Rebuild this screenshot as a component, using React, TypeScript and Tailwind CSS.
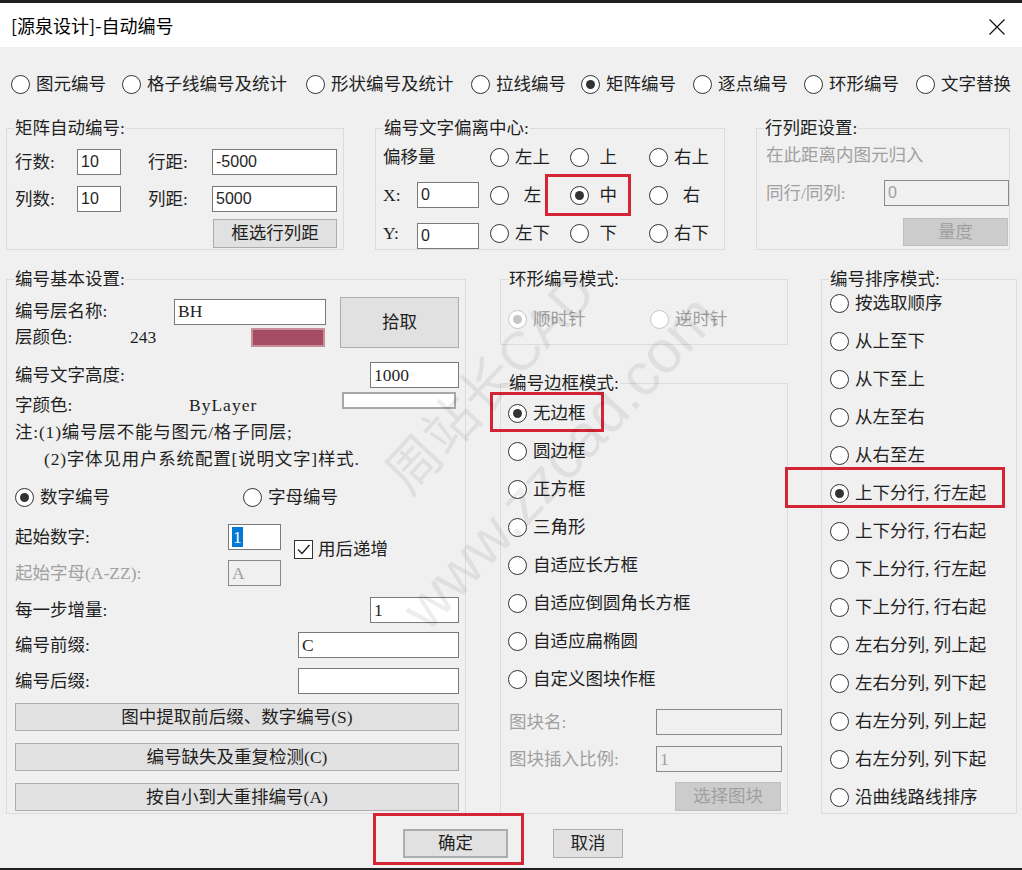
import React from "react";

const BODY_FONT = "font-['Liberation_Serif','Noto_Sans_CJK_SC',serif]";

function Radio({
  label,
  checked = false,
  disabled = false,
  className = "",
}: {
  label: string;
  checked?: boolean;
  disabled?: boolean;
  className?: string;
}) {
  return (
    <div className={`flex h-[24px] items-center ${className}`}>
      <span
        className={`flex h-[19px] w-[19px] shrink-0 items-center justify-center rounded-full border bg-white ${
          disabled ? "border-[#c6c6c6]" : "border-[#333333]"
        }`}
      >
        {checked ? (
          <span className={`h-[9px] w-[9px] rounded-full ${disabled ? "bg-[#c6c6c6]" : "bg-[#333333]"}`} />
        ) : null}
      </span>
      <span className={`ml-[6px] whitespace-pre ${disabled ? "text-[#a0a0a0]" : ""}`}>{label}</span>
    </div>
  );
}

function TextBox({
  value = "",
  className = "",
  disabled = false,
  sans = false,
  selected = false,
}: {
  value?: string;
  className?: string;
  disabled?: boolean;
  sans?: boolean;
  selected?: boolean;
}) {
  return (
    <div
      className={`flex h-[26px] shrink-0 items-center border pl-[3px] ${
        disabled ? "border-[#8a8a8a] bg-[#f0f0f0] text-[#a0a0a0]" : "border-[#7a7a7a] bg-white text-[#1f1f1f]"
      } ${sans ? "font-['Liberation_Sans',sans-serif] text-[16px]" : ""} ${className}`}
    >
      {selected ? <span className="bg-[#0078d7] px-[1px] leading-[20px] text-white">{value}</span> : value}
    </div>
  );
}

function Button({
  label,
  className = "",
  disabled = false,
}: {
  label: string;
  className?: string;
  disabled?: boolean;
}) {
  return (
    <div
      className={`flex shrink-0 items-center justify-center border ${
        disabled ? "border-[#bfbfbf] bg-[#cccccc] text-[#a0a0a0]" : "border-[#adadad] bg-[#e1e1e1] text-[#1f1f1f]"
      } ${className}`}
    >
      {label}
    </div>
  );
}

function GroupBox({
  title,
  className = "",
  children,
}: {
  title: string;
  className?: string;
  children?: React.ReactNode;
}) {
  return (
    <fieldset className={`shrink-0 border border-[#dcdcdc] ${className}`}>
      <legend className="ml-[7px] px-[1px] leading-[20px]">{title}</legend>
      {children}
    </fieldset>
  );
}

/** Red annotation frame drawn over the screenshot. */
function Mark({ className }: { className: string }) {
  return <div className={`pointer-events-none absolute border-[3px] border-[#d42535] ${className}`} />;
}

const topModes = [
  { label: "图元编号", w: "w-[111px]" },
  { label: "格子线编号及统计", w: "w-[184px]" },
  { label: "形状编号及统计", w: "w-[165px]" },
  { label: "拉线编号", w: "w-[110px]" },
  { label: "矩阵编号", w: "w-[112px]", checked: true },
  { label: "逐点编号", w: "w-[111px]" },
  { label: "环形编号", w: "w-[112px]" },
  { label: "文字替换", w: "" },
];

const frameModes = [
  "无边框",
  "圆边框",
  "正方框",
  "三角形",
  "自适应长方框",
  "自适应倒圆角长方框",
  "自适应扁椭圆",
  "自定义图块作框",
];

const sortModes = [
  "按选取顺序",
  "从上至下",
  "从下至上",
  "从左至右",
  "从右至左",
  "上下分行, 行左起",
  "上下分行, 行右起",
  "下上分行, 行左起",
  "下上分行, 行右起",
  "左右分列, 列上起",
  "左右分列, 列下起",
  "右左分列, 列上起",
  "右左分列, 列下起",
  "沿曲线路线排序",
];

export default function App() {
  return (
    <div className={`relative flex h-[870px] w-[1022px] flex-col overflow-hidden bg-[#f0f0f0] text-[17.5px] text-[#1f1f1f] ${BODY_FONT}`}>
      <div className="h-[3px] shrink-0 bg-[#1f1f1f]" />

      {/* title bar */}
      <div className="flex h-[44px] shrink-0 items-center justify-between bg-white pl-[11px] pr-[17px] font-['Noto_Sans_CJK_SC',sans-serif] text-[18px] text-black">
        <span>[源泉设计]-自动编号</span>
        <svg width="16" height="16" viewBox="0 0 16 16" className="mt-[3px]">
          <path d="M0.5 0.5 L15.5 15.5 M15.5 0.5 L0.5 15.5" stroke="#111" strokeWidth="1.2" fill="none" />
        </svg>
      </div>

      <div className="flex flex-1 flex-col">
        {/* numbering type */}
        <div className="mt-[25px] flex pl-[11px]">
          {topModes.map((m) => (
            <Radio key={m.label} label={m.label} checked={m.checked} className={m.w} />
          ))}
        </div>

        {/* matrix settings */}
        <div className="mt-[22px] flex">
          <GroupBox title="矩阵自动编号:" className="ml-[6px] h-[132px] w-[338px]">
            <div className="pl-[8px]">
              <div className="mt-[11px] flex h-[26px] items-center">
                <span className="w-[62px]">行数:</span>
                <TextBox value="10" sans className="w-[44px]" />
                <span className="ml-[27px] w-[64px]">行距:</span>
                <TextBox value="-5000" sans className="w-[125px]" />
              </div>
              <div className="mt-[11px] flex h-[26px] items-center">
                <span className="w-[62px]">列数:</span>
                <TextBox value="10" sans className="w-[44px]" />
                <span className="ml-[27px] w-[64px]">列距:</span>
                <TextBox value="5000" sans className="w-[125px]" />
              </div>
              <div className="mt-[7px] flex w-[322px] justify-end">
                <Button label="框选行列距" className="h-[29px] w-[124px]" />
              </div>
            </div>
          </GroupBox>

          <GroupBox title="编号文字偏离中心:" className="ml-[31px] h-[132px] w-[350px]">
            <div className="pl-[7px]">
              <div className="flex h-[38px] items-center">
                <span className="w-[107px]">偏移量</span>
                <Radio label="左上" className="w-[80px]" />
                <Radio label=" 上" className="w-[79px]" />
                <Radio label="右上" />
              </div>
              <div className="flex h-[38px] items-center">
                <span className="w-[34px]">X:</span>
                <TextBox value="0" sans className="w-[62px]" />
                <span className="w-[11px]" />
                <Radio label="  左" className="w-[80px]" />
                <div className="relative w-[79px]">
                  <Radio label=" 中" checked />
                  <Mark className="left-[-25px] top-[-9px] h-[42px] w-[86px]" />
                </div>
                <Radio label="  右" />
              </div>
              <div className="flex h-[35px] items-center pt-[4px]">
                <span className="w-[34px]">Y:</span>
                <TextBox value="0" sans className="w-[62px] self-end" />
                <span className="w-[11px]" />
                <Radio label="左下" className="w-[80px]" />
                <Radio label=" 下" className="w-[79px]" />
                <Radio label="右下" />
              </div>
            </div>
          </GroupBox>

          <GroupBox title="行列距设置:" className="ml-[31px] h-[132px] w-[254px]">
            <div className="pl-[9px] text-[#a0a0a0]">
              <div className="mt-[5px] flex h-[24px] items-center">在此距离内图元归入</div>
              <div className="mt-[13px] flex h-[26px] items-center">
                <span className="w-[118px]">同行/同列:</span>
                <TextBox value="0" disabled sans className="w-[125px]" />
              </div>
              <div className="mt-[12px] flex w-[242px] justify-end">
                <Button label="量度" disabled className="h-[28px] w-[105px]" />
              </div>
            </div>
          </GroupBox>
        </div>

        <div className="mt-[19px] flex">
          {/* basic settings */}
          <GroupBox title="编号基本设置:" className="ml-[6px] h-[545px] w-[460px]">
            <div className="pl-[8px] pr-[6px]">
              <div className="mt-[8px] flex h-[51px]">
                <div className="w-[311px]">
                  <div className="flex h-[29px] items-center">
                    <span className="w-[159px]">编号层名称:</span>
                    <TextBox value="BH" className="w-[152px]" />
                  </div>
                  <div className="flex h-[22px] items-center">
                    <span className="w-[115px]">层颜色:</span>
                    <span className="w-[121px]">243</span>
                    <span className="h-[19px] w-[74px] border-2 border-[#c98e9c] bg-[#a54b62]" />
                  </div>
                </div>
                <Button label="拾取" className="ml-[14px] h-[51px] w-[119px]" />
              </div>

              <div className="mt-[14px] flex h-[26px] items-center justify-between">
                <span>编号文字高度:</span>
                <TextBox value="1000" className="w-[89px]" />
              </div>

              <div className="mt-[4px] flex h-[26px] items-center">
                <span className="w-[174px]">字颜色:</span>
                <span className="flex-1 tracking-[1px]">ByLayer</span>
                <span className="mr-[3px] h-[17px] w-[114px] self-start border-2 border-[#a8a8a8] bg-white" />
              </div>

              <div className="mt-[2px] flex h-[24px] items-center whitespace-nowrap tracking-[0.8px]">
                注:(1)编号层不能与图元/格子同层;
              </div>
              <div className="ml-[29px] mt-[3px] flex h-[24px] items-center whitespace-nowrap tracking-[0.8px]">
                (2)字体见用户系统配置[说明文字]样式.
              </div>

              <div className="mt-[14px] flex">
                <Radio label="数字编号" checked className="w-[228px]" />
                <Radio label="字母编号" />
              </div>

              <div className="mt-[15px] flex h-[36px] items-start">
                <span className="flex h-[26px] w-[213px] items-center">起始数字:</span>
                <TextBox value="1" selected className="w-[53px]" />
                <div className="ml-[13px] mt-[16px] flex h-[19px] items-center">
                  <span className="flex h-[19px] w-[19px] items-center justify-center border border-[#333333] bg-white">
                    <svg width="15" height="15" viewBox="0 0 15 15">
                      <path d="M2 7.5 L6 11.5 L13.5 3" stroke="#222" strokeWidth="1.4" fill="none" />
                    </svg>
                  </span>
                  <span className="ml-[5px]">用后递增</span>
                </div>
              </div>

              <div className="flex h-[26px] items-center">
                <span className="w-[213px] text-[#a0a0a0]">起始字母(A-ZZ):</span>
                <TextBox value="A" disabled className="w-[53px]" />
              </div>

              <div className="mt-[11px] flex h-[26px] items-center justify-between">
                <span>每一步增量:</span>
                <TextBox value="1" className="w-[89px]" />
              </div>
              <div className="mt-[9px] flex h-[26px] items-center justify-between">
                <span>编号前缀:</span>
                <TextBox value="C" className="w-[161px]" />
              </div>
              <div className="mt-[10px] flex h-[26px] items-center justify-between">
                <span>编号后缀:</span>
                <TextBox className="w-[161px]" />
              </div>

              <Button label="图中提取前后缀、数字编号(S)" className="mt-[9px] h-[28px] w-[444px]" />
              <Button label="编号缺失及重复检测(C)" className="mt-[12px] h-[28px] w-[444px]" />
              <Button label="按自小到大重排编号(A)" className="mt-[12px] h-[28px] w-[444px]" />
            </div>
          </GroupBox>

          {/* ring + frame modes */}
          <div className="ml-[34px] flex w-[288px] flex-col">
            <GroupBox title="环形编号模式:" className="h-[76px] w-[288px]">
              <div className="mt-[18px] flex pl-[7px]">
                <Radio label="顺时针" checked disabled className="w-[142px]" />
                <Radio label="逆时针" disabled />
              </div>
            </GroupBox>

            <GroupBox title="编号边框模式:" className="mt-[28px] h-[441px] w-[288px]">
              <div className="flex flex-col gap-[14px] pl-[7px] pt-[8px]">
                {frameModes.map((label, i) => (
                  <div key={label} className="relative">
                    <Radio label={label} checked={i === 0} />
                    {i === 0 ? <Mark className="left-[-18px] top-[-9px] h-[40px] w-[114px]" /> : null}
                  </div>
                ))}
              </div>
              <div className="pl-[8px] text-[#a0a0a0]">
                <div className="mt-[18px] flex h-[26px] items-center">
                  <span className="w-[147px]">图块名:</span>
                  <TextBox disabled className="w-[126px]" />
                </div>
                <div className="mt-[11px] flex h-[26px] items-center">
                  <span className="w-[147px]">图块插入比例:</span>
                  <TextBox value="1" disabled className="w-[126px]" />
                </div>
                <Button label="选择图块" disabled className="ml-[166px] mt-[10px] h-[29px] w-[106px]" />
              </div>
            </GroupBox>
          </div>

          {/* sort modes */}
          <GroupBox title="编号排序模式:" className="ml-[33px] h-[545px] w-[196px]">
            <div className="flex flex-col gap-[14px] pl-[8px] pt-[2px]">
              {sortModes.map((label, i) => (
                <div key={label} className="relative">
                  <Radio label={label} checked={i === 5} />
                  {i === 5 ? <Mark className="left-[-45px] top-[-14px] h-[41px] w-[220px]" /> : null}
                </div>
              ))}
            </div>
          </GroupBox>
        </div>

        {/* dialog buttons */}
        <div className="mt-[15px] flex">
          <div className="relative ml-[403px]">
            <Button label="确定" className="h-[29px] w-[105px] border-2 border-[#0078d7]" />
            <Mark className="left-[-30px] top-[-16px] h-[52px] w-[151px]" />
          </div>
          <Button label="取消" className="ml-[45px] h-[29px] w-[70px]" />
        </div>
      </div>

      <div className="h-[2px] shrink-0 bg-[#1f1f1f]" />

      {/* watermark */}
      <div className="pointer-events-none absolute inset-0 overflow-hidden font-['Liberation_Sans','Noto_Sans_CJK_SC',sans-serif] text-black/[0.07]">
        <span className="absolute left-[490px] top-[383px] -translate-x-1/2 -translate-y-1/2 rotate-[-47deg] whitespace-nowrap text-[54px] leading-none">
          周站长CAD
        </span>
        <span className="absolute left-[560px] top-[462px] -translate-x-1/2 -translate-y-1/2 rotate-[-47deg] whitespace-nowrap text-[60px] leading-none">
          www.zzcad.com
        </span>
      </div>
    </div>
  );
}
